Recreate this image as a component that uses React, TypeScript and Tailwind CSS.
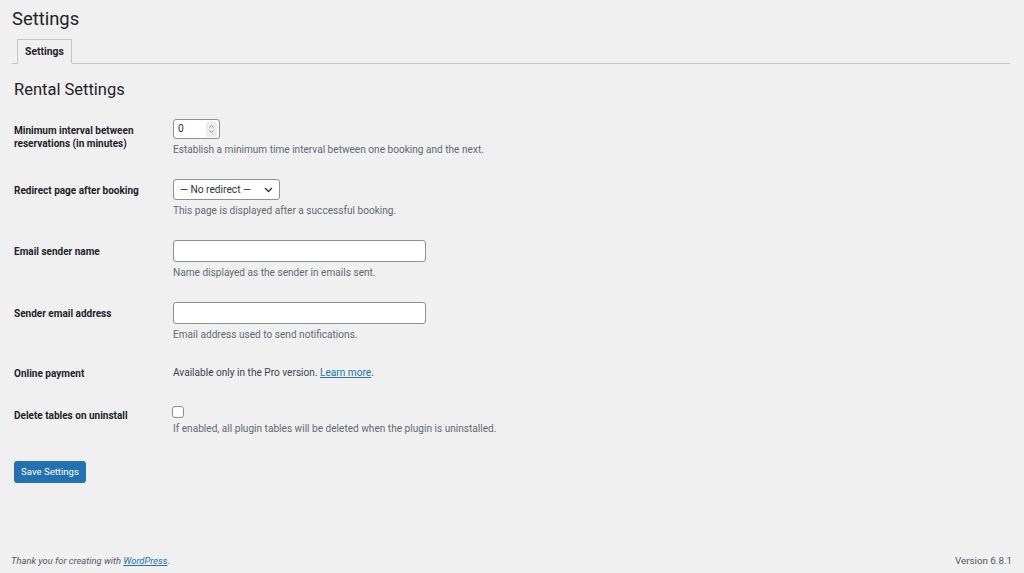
import React from "react";

function Row({ label, children, textOnly, lpt }: { label: React.ReactNode; children: React.ReactNode; textOnly?: boolean; lpt?: string }) {
  return (
    <div className="flex">
      <div className={(lpt ?? "pt-[17px] pb-[12px]") + " w-[159px] shrink-0 pr-[8px] text-[10px] font-bold leading-[13px] text-[#1d2327]"}>
        {label}
      </div>
      <div className={(textOnly ? "pt-[14px] pb-[14px]" : "pt-[12px] pb-[11px]") + " text-[10px] leading-[14px] text-[#3c434a]"}>
        {children}
      </div>
    </div>
  );
}

function Desc({ children }: { children: React.ReactNode }) {
  return <p className="mt-[4px] text-[10.1px] leading-[13px] text-[#646970]">{children}</p>;
}

export default function App() {
  return (
    <div
      className="min-h-[573px] bg-[#f0f0f1] flex flex-col text-[#1d2327]"
      style={{ fontFamily: "Roboto, 'Noto Sans', sans-serif" }}
    >
      <div className="pl-[12px] pr-[14px]">
        <h1 className="pt-[8px] text-[18.4px] leading-[22px] font-normal text-[#1d2327]">Settings</h1>
        <div className="mt-[9px] flex border-b border-[#c3c4c7] h-[25px]">
          <div className="ml-[5px] h-[25px] -mb-px px-[7px] border border-[#c3c4c7] border-b-[#f0f0f1] bg-[#f0f0f1] text-[10.4px] font-bold leading-[23px] text-[#1d2327]">
            Settings
          </div>
        </div>
        <div className="pl-[2px]">
          <h2 className="mt-[15px] text-[16.5px] leading-[22px] font-normal text-[#1d2327]">Rental Settings</h2>
          <div className="mt-[6px]">
            <Row label={<>Minimum interval between<br />reservations (in minutes)</>}>
              <div className="flex h-[20px] w-[47px] items-center justify-between rounded-[3px] border border-[#8c8f94] bg-white pl-[4px] pr-[2px] text-[10.2px] text-[#2c3338]">
                <span>0</span>
                <span className="flex h-[15px] w-[11px] flex-col items-center justify-center rounded-[2px] bg-[#ececec]">
                  <svg width="7" height="12" viewBox="0 0 7 12" fill="none" stroke="#8c8f94" strokeWidth="1">
                    <path d="M1.5 4.5 L3.5 2.5 L5.5 4.5" />
                    <path d="M1.5 7.5 L3.5 9.5 L5.5 7.5" />
                  </svg>
                </span>
              </div>
              <Desc>Establish a minimum time interval between one booking and the next.</Desc>
            </Row>
            <Row label="Redirect page after booking">
              <div className="flex h-[21px] w-[107px] items-center justify-between rounded-[3px] border border-[#8c8f94] bg-white pl-[6px] pr-[6px] text-[10.2px] text-[#2c3338]">
                <span>— No redirect —</span>
                <svg width="9" height="6" viewBox="0 0 9 6" fill="none" stroke="#2c3338" strokeWidth="1.3">
                  <path d="M1 1 L4.5 4.5 L8 1" />
                </svg>
              </div>
              <Desc>This page is displayed after a successful booking.</Desc>
            </Row>
            <Row label="Email sender name">
              <div className="h-[22px] w-[253px] rounded-[3px] border border-[#8c8f94] bg-white" />
              <Desc>Name displayed as the sender in emails sent.</Desc>
            </Row>
            <Row label="Sender email address">
              <div className="h-[22px] w-[253px] rounded-[3px] border border-[#8c8f94] bg-white" />
              <Desc>Email address used to send notifications.</Desc>
            </Row>
            <Row label="Online payment" textOnly lpt="pt-[15px] pb-[14px]">
              <span className="text-[10.1px] text-[#3c434a]">
                Available only in the Pro version.{" "}
                <span className="text-[#2271b1] underline">Learn more</span>.
              </span>
            </Row>
            <Row label="Delete tables on uninstall" lpt="pt-[15px] pb-[12px]">
              <div className="h-[12px] w-[12px] -ml-px rounded-[3px] border border-[#8c8f94] bg-white" />
              <Desc>If enabled, all plugin tables will be deleted when the plugin is uninstalled.</Desc>
            </Row>
          </div>
          <div className="mt-[12px]">
            <div className="inline-flex h-[22px] w-[72px] items-center justify-center rounded-[3px] bg-[#2271b1] text-[9.6px] text-white">
              Save Settings
            </div>
          </div>
        </div>
      </div>
      <div className="flex-1" />
      <div className="flex items-center justify-between pl-[11px] pr-[12px] pb-[5px] text-[9.4px] leading-[14px] text-[#50575e]">
        <span className="italic">
          Thank you for creating with <span className="text-[#2271b1] underline">WordPress</span>.
        </span>
        <span className="text-[9.8px]">Version 6.8.1</span>
      </div>
    </div>
  );
}
